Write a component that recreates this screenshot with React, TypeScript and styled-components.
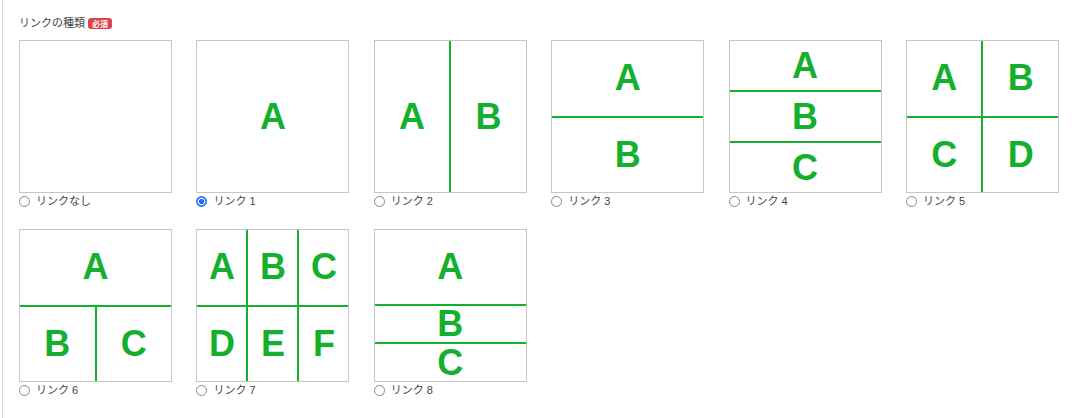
import React, { useState } from "react";
import styled, { createGlobalStyle } from "styled-components";

const GlobalStyle = createGlobalStyle`
  html, body { margin: 0; padding: 0; background: #ffffff; }
  body { font-family: "Noto Sans CJK JP", "Noto Sans", sans-serif; color: #333; }
`;

const Panel = styled.div`
  margin-left: 2px;
  border-left: 1px solid #d7d7df;
  min-height: 418px;
  box-sizing: border-box;
  padding: 14px 0 0 16px;
`;

const TitleRow = styled.div`
  display: flex;
  align-items: center;
  height: 16px;
  margin-bottom: 10px;
`;

const Title = styled.span`
  font-size: 11px;
  line-height: 16px;
  color: #444;
`;

const Badge = styled.span`
  margin-left: 3px;
  margin-top: 2px;
  display: inline-flex;
  align-items: center;
  justify-content: center;
  width: 24px;
  height: 11px;
  border-radius: 3px;
  background: #dc434b;
  color: #fff;
  font-size: 8px;
  line-height: 11px;
  font-weight: 700;
`;

const Options = styled.div`
  display: grid;
  grid-template-columns: repeat(6, 153px);
  justify-content: space-between;
  width: 1040px;
  row-gap: 19px;
`;

const Option = styled.label`
  display: flex;
  flex-direction: column;
  cursor: pointer;
`;

const Box = styled.div`
  width: 153px;
  height: 153px;
  box-sizing: border-box;
  border: 1px solid #c6c6c6;
  background: #fff;
`;

const Layout = styled.div<{ $cols: string; $rows: string; $areas?: string }>`
  width: 100%;
  height: 100%;
  display: grid;
  grid-template-columns: ${(p) => p.$cols};
  grid-template-rows: ${(p) => p.$rows};
  ${(p) => (p.$areas ? `grid-template-areas: ${p.$areas};` : "")}
  gap: 2px;
  background: #12b02c;
`;

const Cell = styled.div<{ $area?: string }>`
  background: #fff;
  display: flex;
  align-items: center;
  justify-content: center;
  min-height: 0;
  ${(p) => (p.$area ? `grid-area: ${p.$area};` : "")}
  font-family: "Liberation Sans", Arial, sans-serif;
  font-weight: 700;
  font-size: 36px;
  line-height: 34px;
  color: #12b02c;
`;

const LabelRow = styled.div`
  display: flex;
  align-items: center;
  height: 17px;
  gap: 6px;
`;

const Radio = styled.input`
  appearance: none;
  -webkit-appearance: none;
  margin: 0;
  width: 11px;
  height: 11px;
  border-radius: 50%;
  box-sizing: border-box;
  border: 1px solid #8a8a8a;
  background: #fff;
  &:checked {
    border: 1px solid #1f6ff2;
    background: radial-gradient(circle, #1f6ff2 0 2.4px, #ffffff 2.9px 3.3px, #3a86ff 3.8px);
  }
`;

const LabelText = styled.span`
  font-family: "Liberation Sans", "Noto Sans CJK JP", sans-serif;
  font-size: 11px;
  line-height: 17px;
  color: #444;
`;

type Def = {
  label: string;
  cols?: string;
  rows?: string;
  areas?: string;
  cells?: { letter: string; area?: string }[];
};

const defs: Def[] = [
  { label: "リンクなし" },
  { label: "リンク 1", cols: "1fr", rows: "1fr", cells: [{ letter: "A" }] },
  { label: "リンク 2", cols: "1fr 1fr", rows: "1fr", cells: [{ letter: "A" }, { letter: "B" }] },
  { label: "リンク 3", cols: "1fr", rows: "1fr 1fr", cells: [{ letter: "A" }, { letter: "B" }] },
  {
    label: "リンク 4",
    cols: "1fr",
    rows: "1fr 1fr 1fr",
    cells: [{ letter: "A" }, { letter: "B" }, { letter: "C" }],
  },
  {
    label: "リンク 5",
    cols: "1fr 1fr",
    rows: "1fr 1fr",
    cells: [{ letter: "A" }, { letter: "B" }, { letter: "C" }, { letter: "D" }],
  },
  {
    label: "リンク 6",
    cols: "1fr 1fr",
    rows: "1fr 1fr",
    areas: `"a a" "b c"`,
    cells: [
      { letter: "A", area: "a" },
      { letter: "B", area: "b" },
      { letter: "C", area: "c" },
    ],
  },
  {
    label: "リンク 7",
    cols: "1fr 1fr 1fr",
    rows: "1fr 1fr",
    cells: ["A", "B", "C", "D", "E", "F"].map((l) => ({ letter: l })),
  },
  {
    label: "リンク 8",
    cols: "1fr",
    rows: "2fr 1fr 1fr",
    cells: [{ letter: "A" }, { letter: "B" }, { letter: "C" }],
  },
];

export default function App() {
  const [selected, setSelected] = useState(1);
  return (
    <>
      <GlobalStyle />
      <Panel>
        <TitleRow>
          <Title>リンクの種類</Title>
          <Badge>必須</Badge>
        </TitleRow>
        <Options>
          {defs.map((d, i) => (
            <Option key={i}>
              <Box>
                {d.cells && (
                  <Layout $cols={d.cols!} $rows={d.rows!} $areas={d.areas}>
                    {d.cells.map((c, j) => (
                      <Cell key={j} $area={c.area}>
                        {c.letter}
                      </Cell>
                    ))}
                  </Layout>
                )}
              </Box>
              <LabelRow>
                <Radio
                  type="radio"
                  name="linkType"
                  checked={selected === i}
                  onChange={() => setSelected(i)}
                />
                <LabelText>{d.label}</LabelText>
              </LabelRow>
            </Option>
          ))}
        </Options>
      </Panel>
    </>
  );
}
